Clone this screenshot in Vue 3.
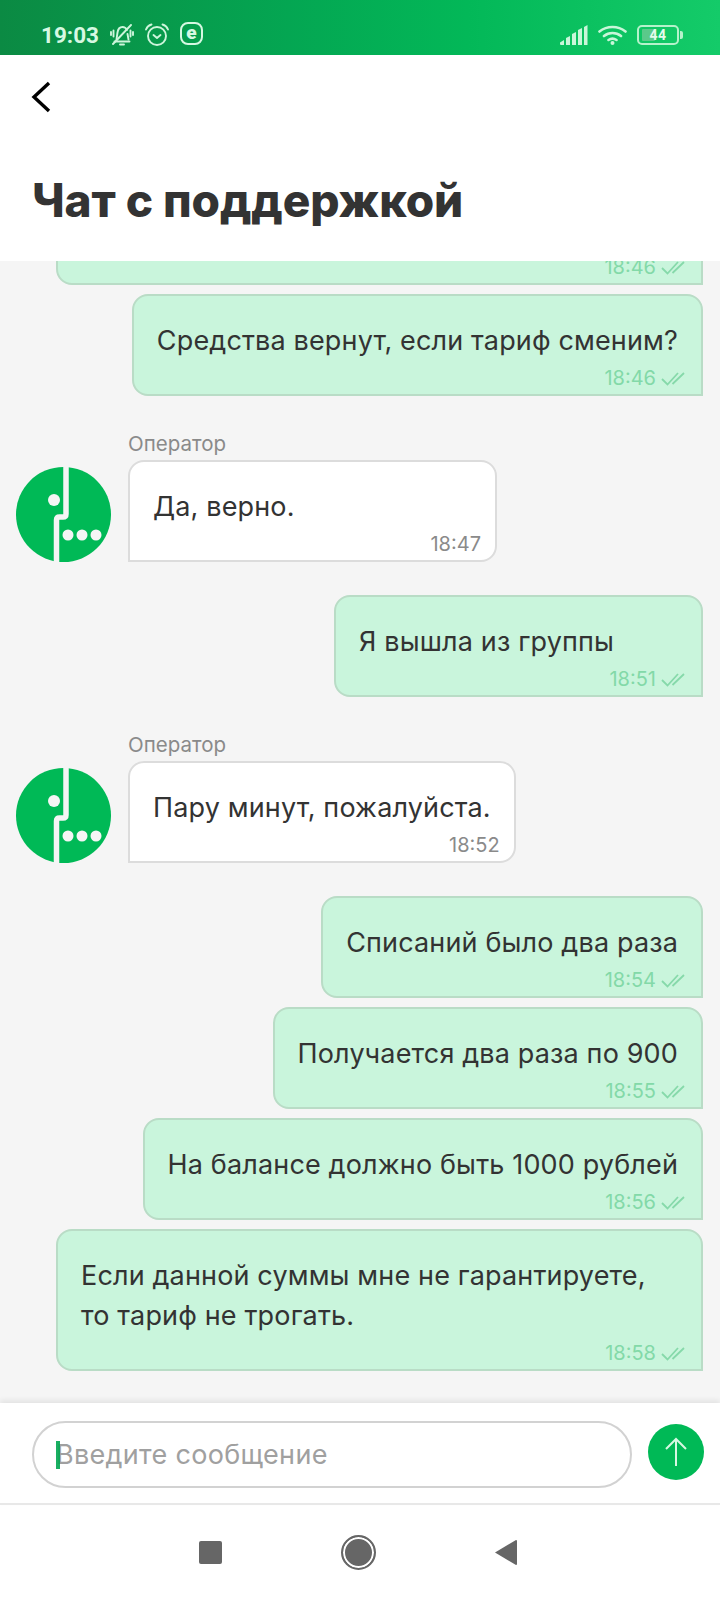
<script setup>
const messages = [
  { id: 1, mine: true, text: '', wide: true, time: '18:46', gap: 0 },
  { id: 2, mine: true, text: 'Средства вернут, если тариф сменим?', time: '18:46', gap: 9 },
  { id: 3, mine: false, text: 'Да, верно.', time: '18:47', gap: 36 },
  { id: 4, mine: true, text: 'Я вышла из группы', time: '18:51', gap: 33 },
  { id: 5, mine: false, text: 'Пару минут, пожалуйста.', time: '18:52', gap: 36 },
  { id: 6, mine: true, text: 'Списаний было два раза', time: '18:54', gap: 33 },
  { id: 7, mine: true, text: 'Получается два раза по 900', time: '18:55', gap: 9 },
  { id: 8, mine: true, text: 'На балансе должно быть 1000 рублей', time: '18:56', gap: 9 },
  { id: 9, mine: true, text: 'Если данной суммы мне не гарантируете, то тариф не трогать.', time: '18:58', gap: 9 }
]
</script>

<template>
  <div class="screen">
    <div class="status">
      <span class="clock">19:03</span>
      <svg class="bell" width="24" height="22" viewBox="0 0 24 22" fill="none" stroke="#cdf5db" stroke-width="1.900" stroke-linecap="round" stroke-linejoin="round">
        <path d="M6.500 15.500L7.500 8.500C8 5 10 3 12.500 3c2 0 3.500 1 4.500 3M17.500 10l1 5.500" />
        <path d="M4.500 17.500h15M10 20.500h4M3.500 6.500v6M1 8v3M20.500 6.500v6M23 8v3" />
        <path d="M3 20L21 1" />
      </svg>
      <svg class="alarm" width="24" height="23" viewBox="0 0 24 23" fill="none" stroke="#cdf5db" stroke-width="1.900" stroke-linecap="round" stroke-linejoin="round">
        <circle cx="12" cy="13" r="9" />
        <path d="M8.500 12l3.500 3 3.500-3M1 6.500C2 4 4 2.200 6.500 1.500M23 6.500C22 4 20 2.200 17.500 1.500" />
      </svg>
      <span class="e-badge">e</span>
      <span class="st-right">
        <svg width="28" height="20" viewBox="0 0 28 20" fill="#c9f6d9">
          <path d="M0 17.500L4 15v5H1a1 1 0 0 1-1-1zM6 13l4-2v9H6zM12 9l4-2v13h-4zM18 5l4-2v17h-4zM24 2l3.500-2v20H24z" />
        </svg>
        <svg width="29" height="20" viewBox="0 0 29 20" fill="none" stroke="#c9f6d9" stroke-width="2.600" stroke-linecap="round">
          <path d="M1.500 6.500C9 .5 20 .5 27.500 6.500M6 11C11 7 18 7 23 11M10.500 15c2.500-1.700 5.500-1.700 8 0" />
          <circle cx="14.500" cy="18" r="2" fill="#c9f6d9" stroke="none" />
        </svg>
        <span class="battery"><span class="bat-fill"></span><span class="bat-num">44</span></span>
      </span>
    </div>

    <header class="head">
      <button class="back" aria-label="Назад">
        <svg width="22" height="32" viewBox="0 0 22 32" fill="none" stroke="#000" stroke-width="3.400">
          <path d="M18 2L3 16l15 14" />
        </svg>
      </button>
      <h1 class="title">Чат с поддержкой</h1>
    </header>

    <main class="chat">
      <template v-for="m in messages" :key="m.id">
        <div v-if="m.mine" class="row mine" :style="{ marginTop: m.gap + 'px' }">
          <div class="bubble out" :class="{ wide: m.wide }">
            <p v-if="m.text" class="text">{{ m.text }}</p>
            <div class="meta">
              <span class="time">{{ m.time }}</span>
              <svg class="ticks" width="24" height="15" viewBox="0 0 24 15" fill="none" stroke="#86d9aa" stroke-width="1.800">
                <path d="M1 8l5.500 5.500L17 2M11.500 13L23 2" />
              </svg>
            </div>
          </div>
        </div>
        <div v-else class="row theirs" :style="{ marginTop: m.gap + 'px' }">
          <svg class="avatar" width="95" height="95" viewBox="0 0 95 95">
            <circle cx="47.500" cy="47.500" r="47.500" fill="#00b956" />
            <path d="M50 -2V47q0 3-3 3H43.500q-3 0-3 3V97" fill="none" stroke="#f5f5f5" stroke-width="5.500" />
            <circle cx="38" cy="33" r="6" fill="#f5f5f5" />
            <circle cx="52" cy="68" r="5.500" fill="#f5f5f5" />
            <circle cx="66" cy="68" r="5.500" fill="#f5f5f5" />
            <circle cx="80" cy="68" r="5.500" fill="#f5f5f5" />
          </svg>
          <div class="col">
            <span class="sender">Оператор</span>
            <div class="bubble in">
              <p class="text">{{ m.text }}</p>
              <div class="meta"><span class="time">{{ m.time }}</span></div>
            </div>
          </div>
        </div>
      </template>
    </main>

    <footer class="composer">
      <div class="input">
        <span class="caret"></span>
        <span class="placeholder">Введите сообщение</span>
      </div>
      <button class="send" aria-label="Отправить">
        <svg width="24" height="30" viewBox="0 0 24 30" fill="none" stroke="#d6f8e2" stroke-width="2">
          <path d="M12 29V2M2 12L12 2l10 10" />
        </svg>
      </button>
    </footer>

    <nav class="navbar">
      <span class="nav-square"></span>
      <span class="nav-home"></span>
      <svg width="22" height="27" viewBox="0 0 22 27" fill="#666">
        <path d="M0 13.500L21 1a1 1 0 0 1 1 1V25a1 1 0 0 1-1 1z" />
      </svg>
    </nav>
  </div>
</template>

<style>
html, body { margin: 0; padding: 0; background: #fff; }
</style>

<style scoped>
.screen {
  width: 720px;
  height: 1600px;
  display: flex;
  flex-direction: column;
  font-family: Inter, "Noto Sans", sans-serif;
  overflow: hidden;
  background: #fff;
}

.status {
  height: 55px;
  flex: none;
  display: flex;
  align-items: center;
  padding: 14px 37px 0 41px;
  box-sizing: border-box;
  background: linear-gradient(90deg, #0b8a43 0%, #04a652 40%, #03b858 65%, #14cb69 100%);
  color: #d6f8e2;
}
.clock {
  font-family: Roboto, sans-serif;
  font-size: 22.500px;
  font-weight: 700;
  margin-right: 11px;
}
.bell, .alarm { margin-right: 11px; }
.e-badge {
  width: 23px;
  height: 23px;
  margin-top: -2px;
  border: 2px solid #d6f8e2;
  border-radius: 8px;
  box-sizing: border-box;
  display: flex;
  align-items: center;
  justify-content: center;
  font-family: Roboto, sans-serif;
  font-weight: 900;
  font-size: 19px;
  line-height: 1;
  padding-bottom: 3px;
}
.st-right {
  margin-left: auto;
  display: flex;
  align-items: center;
  gap: 10px;
}
.battery {
  position: relative;
  width: 42px;
  height: 20px;
  margin-right: 4px;
  border: 2px solid #b5f2cb;
  border-radius: 5px;
  box-sizing: border-box;
  display: flex;
  align-items: center;
  justify-content: center;
}
.battery::after {
  content: "";
  position: absolute;
  right: -6px;
  top: 4px;
  width: 3px;
  height: 8px;
  background: #b5f2cb;
  border-radius: 0 2px 2px 0;
}
.bat-fill {
  position: absolute;
  left: 3px;
  top: 2px;
  bottom: 2px;
  width: 13px;
  background: #5bc98a;
  border-radius: 1px;
}
.bat-num {
  position: relative;
  font-family: Roboto, sans-serif;
  font-weight: 700;
  font-size: 14px;
  letter-spacing: 0.5px;
  color: #e4fbec;
}

.head {
  height: 206px;
  flex: none;
  background: #fff;
  box-sizing: border-box;
  padding: 26px 32px 0;
  position: relative;
  z-index: 1;
}
.back {
  display: block;
  padding: 0;
  margin-left: -1px;
  border: none;
  background: none;
  height: 32px;
}
.title {
  margin: 59px 0 0;
  font-size: 46px;
  line-height: 56px;
  font-weight: 800;
  letter-spacing: -0.1px;
  color: #333;
}

.chat {
  flex: 1;
  min-height: 0;
  overflow: hidden;
  display: flex;
  flex-direction: column;
  justify-content: flex-end;
  background: #f5f5f5;
  padding: 0 17px 32px 16px;
}
.row { display: flex; flex: none; }
.mine { justify-content: flex-end; }
.theirs { align-items: flex-end; gap: 17px; }
.col {
  display: flex;
  flex-direction: column;
  align-items: flex-start;
}
.sender {
  font-size: 20.500px;
  line-height: 24px;
  color: #8a8a8a;
  margin-bottom: 4px;
}
.bubble {
  box-sizing: border-box;
  border-radius: 16px;
  padding: 25px 23px 4px;
  border: 2px solid #b9dcc6;
  min-width: 369px;
}
.out {
  background: #c9f5dc;
  border-bottom-right-radius: 0;
  max-width: 647px;
}
.wide { width: 647px; }
.in {
  background: #fff;
  border-color: #dcdcdc;
  border-bottom-left-radius: 0;
}
.text {
  margin: 0;
  font-size: 27px;
  line-height: 40px;
  letter-spacing: 0.15px;
  color: #333;
}
.meta {
  display: flex;
  justify-content: flex-end;
  align-items: center;
  gap: 5px;
  height: 24px;
  margin-top: 5px;
}
.out .meta { margin-right: -7px; }
.in .meta { margin-right: -9px; }
.time {
  font-size: 20px;
  line-height: 24px;
  color: #8a8a8a;
}
.out .time { color: #83d9a8; }

.composer {
  height: 102px;
  flex: none;
  box-sizing: border-box;
  display: flex;
  align-items: center;
  gap: 16px;
  padding: 2px 16px 0 32px;
  background: #fff;
  border-bottom: 2px solid #e8e8e8;
  box-shadow: 0 -3px 5px rgba(0, 0, 0, 0.07);
  position: relative;
}
.input {
  flex: 1;
  height: 67px;
  border: 2px solid #d2d2d2;
  border-radius: 34px;
  box-sizing: border-box;
  display: flex;
  align-items: center;
  padding-left: 22px;
  position: relative;
}
.caret {
  position: absolute;
  left: 22px;
  top: 18px;
  width: 4px;
  height: 28px;
  background: #00a651;
  opacity: 0.9;
}
.placeholder {
  font-size: 27px;
  letter-spacing: 0.3px;
  color: #a0a0a0;
}
.send {
  width: 56px;
  height: 56px;
  padding: 0;
  margin-bottom: 4px;
  border: none;
  border-radius: 50%;
  background: #00b956;
  display: flex;
  align-items: center;
  justify-content: center;
}

.navbar {
  height: 95px;
  flex: none;
  display: flex;
  align-items: center;
  box-sizing: border-box;
  justify-content: center;
  gap: 119px;
  padding-right: 5px;
  background: #fff;
}
.nav-square {
  width: 23px;
  height: 23px;
  border-radius: 2px;
  background: #666;
}
.nav-home {
  width: 35px;
  height: 35px;
  box-sizing: border-box;
  border-radius: 50%;
  border: 2px solid #666;
  background: #666;
  box-shadow: inset 0 0 0 2px #fff;
}
</style>
